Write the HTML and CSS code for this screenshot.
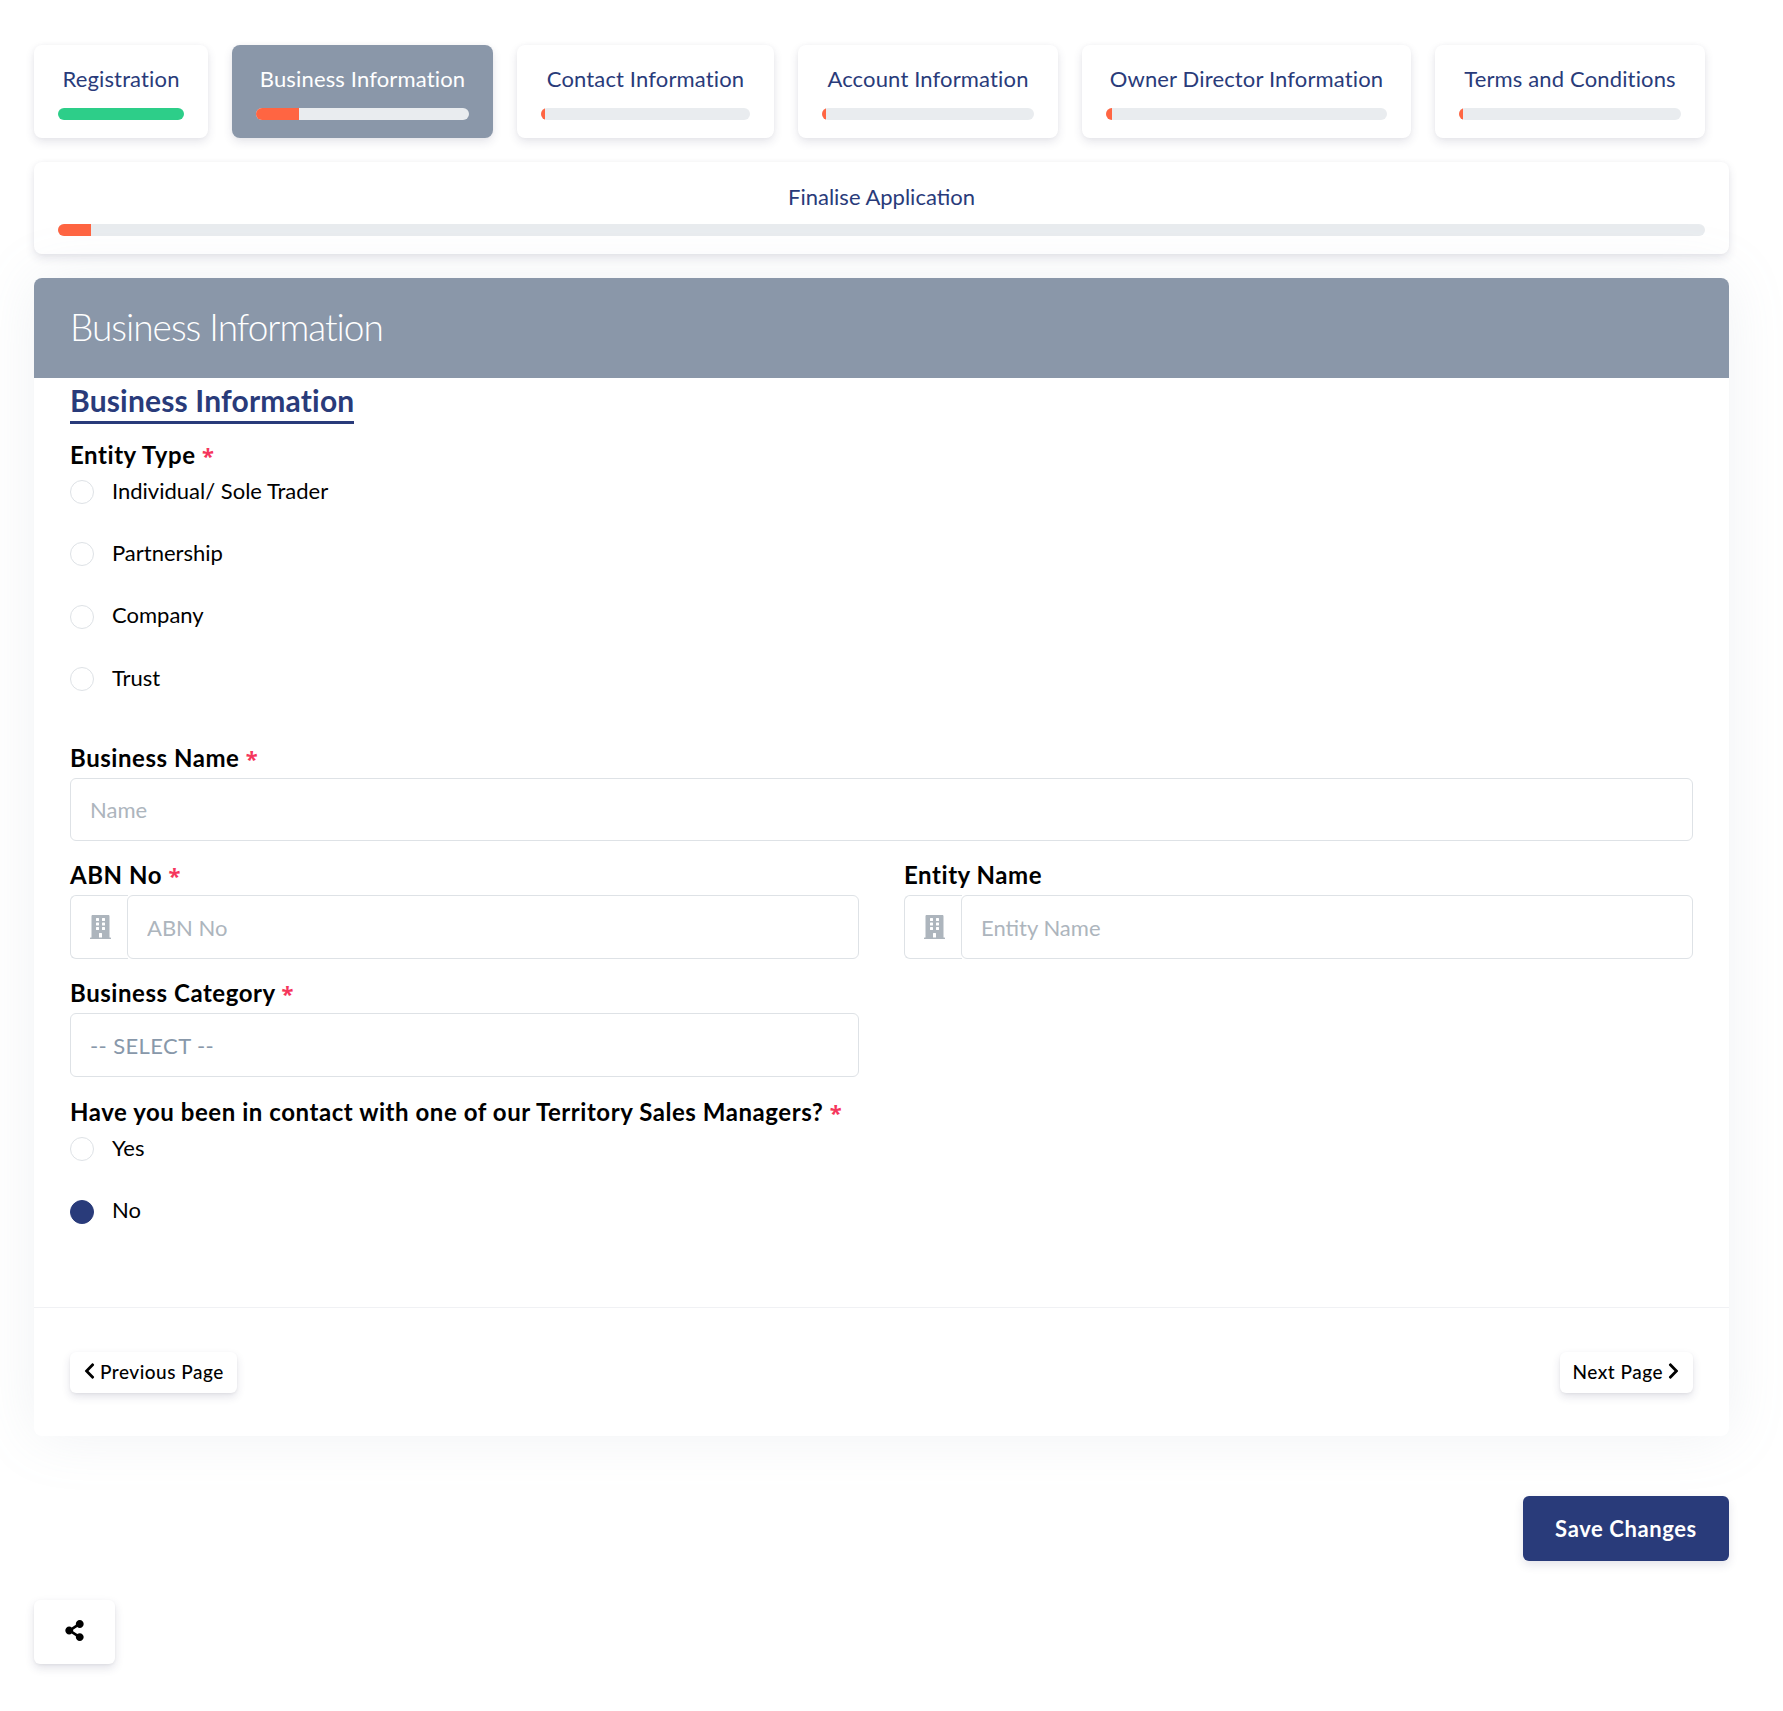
FILE: index.html
```html
<!DOCTYPE html>
<html lang="en">
<head>
    <meta charset="UTF-8">
    <meta name="viewport" content="width=device-width, initial-scale=1.0">
    <title>Business Information</title>
    <link rel="stylesheet" href="styles.css">
</head>
<body>
    <div class="tabs">
        <div class="tab">
            <div class="tab-title">Registration</div>
            <div class="bar"><div class="bar-fill green" style="width: 100%;"></div></div>
        </div>
        <div class="tab active">
            <div class="tab-title">Business Information</div>
            <div class="bar"><div class="bar-fill" style="width: 20%;"></div></div>
        </div>
        <div class="tab">
            <div class="tab-title">Contact Information</div>
            <div class="bar"><div class="bar-fill" style="width: 2%;"></div></div>
        </div>
        <div class="tab">
            <div class="tab-title">Account Information</div>
            <div class="bar"><div class="bar-fill" style="width: 2%;"></div></div>
        </div>
        <div class="tab">
            <div class="tab-title">Owner Director Information</div>
            <div class="bar"><div class="bar-fill" style="width: 2%;"></div></div>
        </div>
        <div class="tab">
            <div class="tab-title">Terms and Conditions</div>
            <div class="bar"><div class="bar-fill" style="width: 2%;"></div></div>
        </div>
    </div>

    <div class="tab tab-wide">
        <div class="tab-title">Finalise Application</div>
        <div class="bar"><div class="bar-fill" style="width: 2%;"></div></div>
    </div>

    <div class="card">
        <div class="card-header">Business Information</div>
        <div class="card-body">
            <h3 class="section-title">Business Information</h3>

            <div class="label first-label">Entity Type <span class="star">*</span></div>
            <div class="radio-group">
                <label class="radio"><input type="radio" name="entity"> <span class="radio-text">Individual/ Sole Trader</span></label>
                <label class="radio"><input type="radio" name="entity"> <span class="radio-text">Partnership</span></label>
                <label class="radio"><input type="radio" name="entity"> <span class="radio-text">Company</span></label>
                <label class="radio"><input type="radio" name="entity"> <span class="radio-text">Trust</span></label>
            </div>

            <div class="label name-label">Business Name <span class="star">*</span></div>
            <input class="field name-field" type="text" placeholder="Name">

            <div class="form-row">
                <div>
                    <div class="label">ABN No <span class="star">*</span></div>
                    <div class="input-group">
                        <span class="addon">
                            <svg viewBox="0 0 448 512"><path d="M436 480h-20V24c0-13.255-10.745-24-24-24H56C42.745 0 32 10.745 32 24v456H12c-6.627 0-12 5.373-12 12v20h448v-20c0-6.627-5.373-12-12-12zM128 76c0-6.627 5.373-12 12-12h40c6.627 0 12 5.373 12 12v40c0 6.627-5.373 12-12 12h-40c-6.627 0-12-5.373-12-12V76zm0 96c0-6.627 5.373-12 12-12h40c6.627 0 12 5.373 12 12v40c0 6.627-5.373 12-12 12h-40c-6.627 0-12-5.373-12-12v-40zm52 148h-40c-6.627 0-12-5.373-12-12v-40c0-6.627 5.373-12 12-12h40c6.627 0 12 5.373 12 12v40c0 6.627-5.373 12-12 12zm76 160h-64v-84c0-6.627 5.373-12 12-12h40c6.627 0 12 5.373 12 12v84zm64-172c0 6.627-5.373 12-12 12h-40c-6.627 0-12-5.373-12-12v-40c0-6.627 5.373-12 12-12h40c6.627 0 12 5.373 12 12v40zm0-96c0 6.627-5.373 12-12 12h-40c-6.627 0-12-5.373-12-12v-40c0-6.627 5.373-12 12-12h40c6.627 0 12 5.373 12 12v40zm0-96c0 6.627-5.373 12-12 12h-40c-6.627 0-12-5.373-12-12V76c0-6.627 5.373-12 12-12h40c6.627 0 12 5.373 12 12v40z"/></svg>
                        </span>
                        <input class="field" type="text" placeholder="ABN No">
                    </div>
                </div>
                <div>
                    <div class="label">Entity Name</div>
                    <div class="input-group">
                        <span class="addon">
                            <svg viewBox="0 0 448 512"><path d="M436 480h-20V24c0-13.255-10.745-24-24-24H56C42.745 0 32 10.745 32 24v456H12c-6.627 0-12 5.373-12 12v20h448v-20c0-6.627-5.373-12-12-12zM128 76c0-6.627 5.373-12 12-12h40c6.627 0 12 5.373 12 12v40c0 6.627-5.373 12-12 12h-40c-6.627 0-12-5.373-12-12V76zm0 96c0-6.627 5.373-12 12-12h40c6.627 0 12 5.373 12 12v40c0 6.627-5.373 12-12 12h-40c-6.627 0-12-5.373-12-12v-40zm52 148h-40c-6.627 0-12-5.373-12-12v-40c0-6.627 5.373-12 12-12h40c6.627 0 12 5.373 12 12v40c0 6.627-5.373 12-12 12zm76 160h-64v-84c0-6.627 5.373-12 12-12h40c6.627 0 12 5.373 12 12v84zm64-172c0 6.627-5.373 12-12 12h-40c-6.627 0-12-5.373-12-12v-40c0-6.627 5.373-12 12-12h40c6.627 0 12 5.373 12 12v40zm0-96c0 6.627-5.373 12-12 12h-40c-6.627 0-12-5.373-12-12v-40c0-6.627 5.373-12 12-12h40c6.627 0 12 5.373 12 12v40zm0-96c0 6.627-5.373 12-12 12h-40c-6.627 0-12-5.373-12-12V76c0-6.627 5.373-12 12-12h40c6.627 0 12 5.373 12 12v40z"/></svg>
                        </span>
                        <input class="field" type="text" placeholder="Entity Name">
                    </div>
                </div>
            </div>

            <div class="form-row">
                <div>
                    <div class="label">Business Category <span class="star">*</span></div>
                    <select class="field select-field">
                        <option>-- SELECT --</option>
                    </select>
                </div>
            </div>

            <div class="label contact-label">Have you been in contact with one of our Territory Sales Managers? <span class="star">*</span></div>
            <div class="radio-group">
                <label class="radio"><input type="radio" name="contact"> <span class="radio-text">Yes</span></label>
                <label class="radio"><input type="radio" name="contact" checked> <span class="radio-text">No</span></label>
            </div>
        </div>
        <div class="card-footer">
            <button class="page-btn">
                <svg viewBox="0 0 320 512"><path d="M34.52 239.03L228.87 44.69c9.37-9.37 24.57-9.37 33.94 0l22.67 22.67c9.36 9.36 9.37 24.52.04 33.9L131.49 256l154.02 154.75c9.34 9.38 9.32 24.54-.04 33.9l-22.67 22.67c-9.37 9.37-24.57 9.37-33.94 0L34.52 272.97c-9.37-9.37-9.37-24.57 0-33.94z"/></svg>
                Previous Page
            </button>
            <button class="page-btn">
                Next Page
                <svg viewBox="0 0 320 512"><path d="M285.476 272.971L91.132 467.314c-9.373 9.373-24.569 9.373-33.941 0l-22.667-22.667c-9.357-9.357-9.375-24.522-.04-33.901L188.505 256 34.484 101.255c-9.335-9.379-9.317-24.544.04-33.901l22.667-22.667c9.373-9.373 24.569-9.373 33.941 0L285.475 239.03c9.373 9.372 9.373 24.568.001 33.941z"/></svg>
            </button>
        </div>
    </div>

    <div class="save-row">
        <button class="save-btn">Save Changes</button>
    </div>

    <button class="share-btn">
        <svg viewBox="0 0 448 512"><path d="M352 320c-22.608 0-43.387 7.819-59.79 20.895l-102.486-64.054a96.551 96.551 0 0 0 0-41.683l102.486-64.054C308.613 184.181 329.392 192 352 192c53.019 0 96-42.981 96-96S405.019 0 352 0s-96 42.981-96 96c0 7.158.79 14.13 2.276 20.841L155.79 180.895C139.387 167.819 118.608 160 96 160c-53.019 0-96 42.981-96 96s42.981 96 96 96c22.608 0 43.387-7.819 59.79-20.895l102.486 64.054A96.301 96.301 0 0 0 256 416c0 53.019 42.981 96 96 96s96-42.981 96-96-42.981-96-96-96z"/></svg>
    </button>
</body>
</html>
```

FILE: styles.css
```css
* {
    box-sizing: border-box;
}

body {
    font-family: 'Lato', 'Noto Sans', sans-serif;
    margin: 0;
    padding: 45px 54px 48px 34px;
    background-color: #fff;
    color: #000;
}

/* progress tabs */
.tabs {
    display: grid;
    grid-template-columns: 174px 261px 257px 260px 329px 270px;
    column-gap: 24px;
    margin-bottom: 24px;
}

.tab {
    height: 93px;
    padding: 23px 24px 0;
    background-color: #fff;
    border-radius: 8px;
    box-shadow: 0 4px 10px rgba(50, 50, 93, 0.12), 0 0 4px rgba(0, 0, 0, 0.03);
    color: #293b7a;
    text-align: center;
}

.tab.active {
    background-color: #8a97a9;
    color: #fff;
}

.tab-title {
    height: 22px;
    margin-bottom: 18px;
    font-size: 22px;
    letter-spacing: 0.15px;
    line-height: 22px;
    white-space: nowrap;
}

.tab-wide {
    height: 92px;
    margin-bottom: 24px;
    padding-top: 24px;
}

.tab-wide .tab-title {
    margin-bottom: 16px;
    letter-spacing: 0;
}

.bar {
    height: 12px;
    background-color: #e9ecef;
    border-radius: 6px;
    overflow: hidden;
}

.bar-fill {
    height: 100%;
    background-color: #ff6542;
}

.bar-fill.green {
    background-color: #2dce89;
}

/* main card */
.card {
    background-color: #fff;
    border-radius: 8px;
    box-shadow: 0 0 60px rgba(136, 152, 170, 0.13);
}

.card-header {
    height: 100px;
    padding-left: 36px;
    background-color: #8a97a9;
    border-radius: 8px 8px 0 0;
    color: #fff;
    font-size: 37px;
    font-weight: 300;
    letter-spacing: -1px;
    line-height: 98px;
}

.card-body {
    padding: 0 36px;
    height: 929px;
}

.section-title {
    display: inline-block;
    margin: 0;
    padding: 4px 0 2px;
    border-bottom: 3px solid #293b7a;
    color: #293b7a;
    font-size: 30px;
    font-weight: 700;
    letter-spacing: 0.17px;
    line-height: 37px;
}

.label {
    height: 24px;
    margin-bottom: 8px;
    font-size: 24px;
    font-weight: 700;
    letter-spacing: 0.55px;
    line-height: 24px;
    white-space: nowrap;
}

.first-label {
    margin-top: 19px;
    margin-bottom: 13px;
}

.name-label {
    margin-top: 55px;
}

.contact-label {
    margin-top: 23px;
    margin-bottom: 13px;
}

.star {
    color: #f5365c;
    font-family: 'Noto Sans', sans-serif;
    font-size: 22px;
    letter-spacing: 0;
}

.radio-group {
    display: flex;
    flex-direction: column;
    gap: 38.4px;
}

.radio {
    display: flex;
    align-items: center;
    gap: 18px;
    height: 24px;
    font-size: 22px;
}

.radio-text {
    padding-bottom: 4px;
}

.radio input {
    appearance: none;
    width: 24px;
    height: 24px;
    margin: 0;
    background-color: #fff;
    border: 1px solid #dee2e6;
    border-radius: 50%;
}

.radio input:checked {
    background-color: #293b7a;
    border-color: #293b7a;
}

.field {
    display: block;
    width: 100%;
    height: 64px;
    padding: 0 19px;
    background-color: #fff;
    border: 1px solid #dee2e6;
    border-radius: 6px;
    color: #8898aa;
    font-family: inherit;
    font-size: 22px;
}

.name-field {
    height: 63px;
}

.field::placeholder {
    color: #adb5bd;
    opacity: 1;
}

.select-field {
    appearance: none;
    letter-spacing: 0.4px;
}

.form-row {
    display: grid;
    grid-template-columns: 789px 789px;
    column-gap: 45px;
    margin-top: 22px;
}

.input-group {
    display: flex;
}

.addon {
    display: flex;
    flex: none;
    align-items: center;
    justify-content: center;
    width: 58px;
    height: 64px;
    margin-right: -1px;
    padding-left: 2px;
    background-color: #fff;
    border: 1px solid #dee2e6;
    border-right: none;
    border-radius: 6px 0 0 6px;
}

.addon svg {
    width: 21px;
    height: 24px;
    fill: #adb5bd;
}

.card-footer {
    display: flex;
    justify-content: space-between;
    height: 129px;
    padding: 44px 36px 0;
    border-top: 1px solid #f0f1f4;
}

.page-btn {
    display: flex;
    align-items: center;
    gap: 4px;
    height: 41px;
    padding: 0 13px 3px;
    background-color: #fff;
    border: none;
    border-radius: 6px;
    box-shadow: 0 4px 8px rgba(50, 50, 93, 0.13), 0 1px 3px rgba(0, 0, 0, 0.05);
    color: #000;
    font-family: inherit;
    font-size: 19px;
    font-weight: 500;
    letter-spacing: 0.5px;
}

.page-btn svg {
    width: 13px;
    height: 18px;
}

.save-row {
    display: flex;
    justify-content: flex-end;
    margin-top: 60px;
}

.save-btn {
    width: 206px;
    height: 65px;
    background-color: #293b7a;
    border: none;
    border-radius: 6px;
    box-shadow: 0 4px 10px rgba(50, 50, 93, 0.13);
    color: #fff;
    font-family: inherit;
    font-size: 22px;
    font-weight: 700;
    letter-spacing: 0.6px;
}

.share-btn {
    display: flex;
    align-items: center;
    justify-content: center;
    width: 81px;
    height: 64px;
    margin-top: 39px;
    padding: 0 0 3px;
    background-color: #fff;
    border: none;
    border-radius: 6px;
    box-shadow: 0 4px 10px rgba(50, 50, 93, 0.14), 0 1px 3px rgba(0, 0, 0, 0.05);
}

.share-btn svg {
    width: 19px;
    height: 21px;
}
```
